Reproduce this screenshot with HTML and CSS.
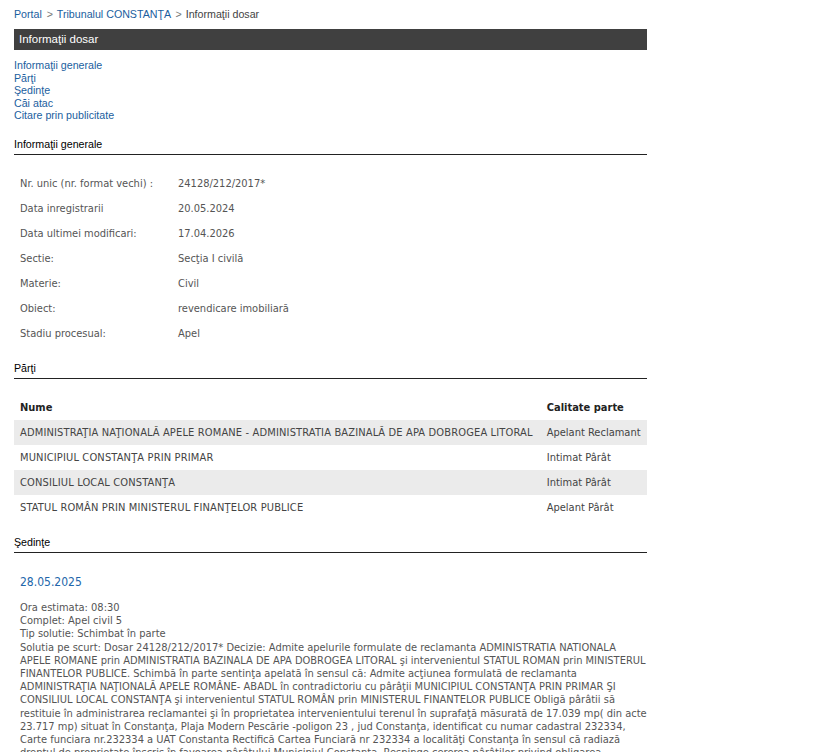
FILE: index.html
```html
<!DOCTYPE html>
<html lang="ro">
  <head>
    <meta charset="UTF-8" />
    <title>Informaţii dosar</title>
    <link rel="stylesheet" href="styles.css">
  </head>
  <body>
    <div id="container">
      <div class="breadcrumb">
        <a href="#">Portal</a>
        <span class="sep">&gt;</span>
        <a href="#">Tribunalul CONSTANŢA</a>
        <span class="sep">&gt;</span>
        <span class="current">Informaţii dosar</span>
      </div>

      <div class="title-bar">Informaţii dosar</div>

      <ul class="tabs">
        <li><a href="#">Informaţii generale</a></li>
        <li><a href="#">Părţi</a></li>
        <li><a href="#">Şedinţe</a></li>
        <li><a href="#">Căi atac</a></li>
        <li><a href="#">Citare prin publicitate</a></li>
      </ul>

      <!-- informatii generale -->
      <h2 class="section-title">Informaţii generale</h2>
      <table class="info">
        <tr><td class="label">Nr. unic (nr. format vechi) :</td><td>24128/212/2017*</td></tr>
        <tr><td class="label">Data inregistrarii</td><td>20.05.2024</td></tr>
        <tr><td class="label">Data ultimei modificari:</td><td>17.04.2026</td></tr>
        <tr><td class="label">Sectie:</td><td>Secţia I civilă</td></tr>
        <tr><td class="label">Materie:</td><td>Civil</td></tr>
        <tr><td class="label">Obiect:</td><td>revendicare imobiliară</td></tr>
        <tr><td class="label">Stadiu procesual:</td><td>Apel</td></tr>
      </table>

      <!-- parti -->
      <h2 class="section-title">Părţi</h2>
      <table class="parti">
        <tr><th>Nume</th><th>Calitate parte</th></tr>
        <tr class="odd"><td class="nume">ADMINISTRAŢIA NAŢIONALĂ APELE ROMANE - ADMINISTRATIA BAZINALĂ DE APA DOBROGEA LITORAL</td><td>Apelant Reclamant</td></tr>
        <tr><td class="nume">MUNICIPIUL CONSTANŢA PRIN PRIMAR</td><td>Intimat Pârât</td></tr>
        <tr class="odd"><td class="nume">CONSILIUL LOCAL CONSTANŢA</td><td>Intimat Pârât</td></tr>
        <tr><td class="nume">STATUL ROMÂN PRIN MINISTERUL FINANŢELOR PUBLICE</td><td>Apelant Pârât</td></tr>
      </table>

      <!-- sedinte -->
      <h2 class="section-title">Şedinţe</h2>
      <div class="sedinta">
        <div class="sedinta-date">28.05.2025</div>
        <div class="sedinta-body">
          Ora estimata: 08:30<br />
          Complet: Apel civil 5<br />
          Tip solutie: Schimbat în parte<br />
          Solutia pe scurt: Dosar 24128/212/2017* Decizie: Admite apelurile formulate de reclamanta ADMINISTRATIA NATIONALA APELE ROMANE prin ADMINISTRATIA BAZINALA DE APA DOBROGEA LITORAL şi intervenientul STATUL ROMAN prin MINISTERUL FINANTELOR PUBLICE. Schimbă în parte sentinţa apelată în sensul că: Admite acţiunea formulată de reclamanta ADMINISTRAŢIA NAŢIONALĂ APELE ROMÂNE- ABADL în contradictoriu cu pârâţii MUNICIPIUL CONSTANŢA PRIN PRIMAR ŞI CONSILIUL LOCAL CONSTANŢA şi intervenientul STATUL ROMÂN prin MINISTERUL FINANTELOR PUBLICE Obligă pârâtii să restituie în administrarea reclamantei şi în proprietatea intervenientului terenul în suprafaţă măsurată de 17.039 mp( din acte 23.717 mp) situat în Constanţa, Plaja Modern Pescărie -poligon 23 , jud Constanţa, identificat cu numar cadastral 232334, Carte funciara nr.232334 a UAT Constanta Rectifică Cartea Funciară nr 232334 a localităţi Constanţa în sensul că radiază dreptul de proprietate înscris în favoarea pârâtului Municipiul Constanta. Respinge cererea pârâţilor privind obligarea intervenientului la plata cheltuielilor de judecată.
        </div>
      </div>
    </div>
  </body>
</html>
```

FILE: styles.css
```css
html {
  height: 100%;
}
body {
  margin: 0;
  background-color: #fff;
  font-family: "Liberation Sans", Arial, sans-serif;
  font-size: 8pt;
  color: #333;
}
#container {
  width: 633px;
  margin: 0 0 0 14px;
  padding-top: 8px;
}

a {
  color: #1a5e9e;
  text-decoration: none;
}

.breadcrumb {
  height: 14px;
  color: #444;
}
.breadcrumb .sep {
  color: #777;
  margin: 0 1px 0 2px;
}

.title-bar {
  margin-top: 7px;
  height: 21px;
  line-height: 21px;
  padding-left: 5px;
  background-color: #404040;
  color: #fff;
  font-size: 11.5px;
}

.tabs {
  list-style: none;
  margin: 9px 0 0 0;
  padding: 0;
}
.tabs li {
  line-height: 12.6px;
}

.section-title {
  margin: 16px 0 0 0;
  padding-bottom: 4px;
  font-size: 8pt;
  font-weight: normal;
  color: #000;
  border-bottom: 1px solid #222;
}

/* tabel informatii */
.info,
.parti {
  width: 100%;
  border-collapse: collapse;
  font-family: "DejaVu Sans Condensed", "DejaVu Sans", sans-serif;
  font-size: 11px;
  color: #555;
}
.info {
  margin-top: 16px;
}
.info td {
  height: 25px;
  padding: 0 6px;
}
.info td.label {
  width: 146px;
}

.parti {
  margin-top: 16px;
  color: #444;
}
.parti th {
  height: 25px;
  padding: 0 6px;
  text-align: left;
  font-weight: bold;
  color: #222;
}
.parti td {
  height: 25px;
  padding: 0 6px;
  white-space: nowrap;
}
.parti td.nume {
  letter-spacing: 0.15px;
}
.parti tr.odd td {
  background-color: #ebebeb;
}

.sedinta {
  padding: 0 0 0 6px;
  font-family: "DejaVu Sans Condensed", "DejaVu Sans", sans-serif;
  font-size: 11px;
  color: #555;
}
.sedinta-date {
  margin-top: 22px;
  color: #2266aa;
  font-size: 12px;
}
.sedinta-body {
  margin-top: 12px;
  line-height: 13.2px;
}
```
